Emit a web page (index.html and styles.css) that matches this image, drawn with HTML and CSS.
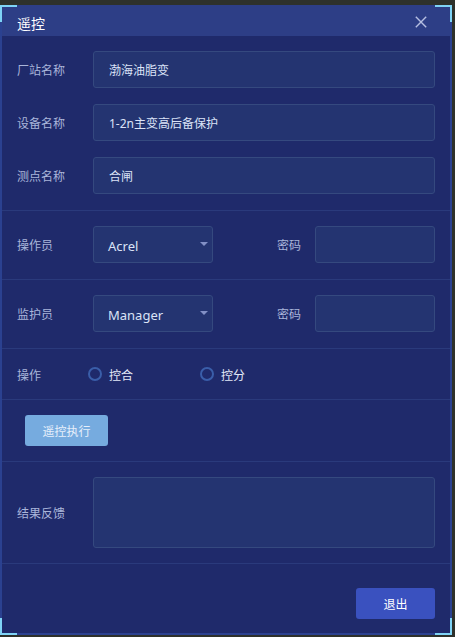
FILE: index.html
```html
<!DOCTYPE html>
<html lang="zh-CN">
<head>
<meta charset="utf-8">
<title>遥控</title>
<link rel="stylesheet" href="styles.css">
</head>
<body>
<div class="dialog">
  <span class="corner tl"></span>
  <span class="corner tr"></span>
  <span class="corner bl"></span>
  <span class="corner br"></span>

  <div class="header">
    <span class="title">遥控</span>
    <svg class="close" width="12" height="12" viewBox="0 0 12 12">
      <path d="M0.8 0.8 L11.2 11.2 M11.2 0.8 L0.8 11.2" stroke="#b6bfe2" stroke-width="1.4" fill="none"/>
    </svg>
  </div>

  <div class="section fields">
    <div class="row">
      <span class="label">厂站名称</span>
      <div class="input">渤海油脂变</div>
    </div>
    <div class="row">
      <span class="label">设备名称</span>
      <div class="input">1-2n主变高后备保护</div>
    </div>
    <div class="row">
      <span class="label">测点名称</span>
      <div class="input">合闸</div>
    </div>
  </div>

  <div class="section">
    <div class="row">
      <span class="label">操作员</span>
      <div class="select"><span>Acrel</span><i class="caret"></i></div>
      <span class="label pwd-label">密码</span>
      <div class="input pwd"></div>
    </div>
  </div>

  <div class="section">
    <div class="row">
      <span class="label">监护员</span>
      <div class="select"><span>Manager</span><i class="caret"></i></div>
      <span class="label pwd-label">密码</span>
      <div class="input pwd"></div>
    </div>
  </div>

  <div class="section radios">
    <span class="label op-label">操作</span>
    <label class="radio-item"><span class="radio"></span><span class="radio-text">控合</span></label>
    <label class="radio-item second"><span class="radio"></span><span class="radio-text">控分</span></label>
  </div>

  <div class="section exec">
    <button class="btn-exec">遥控执行</button>
  </div>

  <div class="section">
    <div class="row">
      <span class="label">结果反馈</span>
      <div class="input textarea"></div>
    </div>
  </div>

  <div class="footer">
    <button class="btn-exit">退出</button>
  </div>
</div>
</body>
</html>
```

FILE: styles.css
```css
* { box-sizing: border-box; }

html, body {
  margin: 0;
  padding: 0;
  background: #2e312b;
  font-family: "Noto Sans", "Noto Sans CJK SC", sans-serif;
}

.dialog {
  position: relative;
  margin-top: 5px;
  width: 452px;
  height: 630px;
  border: 2px solid #2b4190;
  border-top-color: #2d3e86;
  background: #1f2a6b;
  display: flex;
  flex-direction: column;
}

.corner {
  position: absolute;
  width: 17px;
  height: 17px;
  border: 0 solid #7fd3f6;
}
.corner.tl { top: -2px; left: -2px; border-top-width: 2px; border-left-width: 2px; }
.corner.tr { top: -2px; right: -2px; border-top-width: 2px; border-right-width: 2px; }
.corner.bl { bottom: -2px; left: -2px; border-bottom-width: 2px; border-left-width: 2px; }
.corner.br { bottom: -2px; right: -2px; border-bottom-width: 2px; border-right-width: 2px; }

.header {
  height: 29px;
  background: #2d3e86;
  display: flex;
  align-items: center;
  justify-content: space-between;
  padding: 2px 23px 0 15px;
}
.title {
  color: #ffffff;
  font-size: 14px;
  font-family: "Noto Sans CJK SC", sans-serif;
}
.close { display: block; margin-top: -2px; }

.section {
  padding: 15px 15px 16px 15px;
  border-bottom: 1px solid #2a3a7c;
}
.fields {
  display: flex;
  flex-direction: column;
  gap: 16px;
}

.row {
  display: flex;
  align-items: center;
}

.label {
  width: 76px;
  flex: none;
  color: #a9b5da;
  font-size: 12px;
  font-family: "Noto Sans CJK SC", sans-serif;
}

.input {
  flex: 1;
  height: 37px;
  background: #243471;
  border: 1px solid #35497f;
  border-radius: 3px;
  padding: 0 15px;
  display: flex;
  align-items: center;
  color: #dbe3f7;
  font-size: 12px;
}

.select {
  width: 120px;
  flex: none;
  height: 37px;
  background: #243471;
  border: 1px solid #35497f;
  border-radius: 3px;
  padding: 2px 4px 0 14px;
  display: flex;
  align-items: center;
  justify-content: space-between;
  color: #dbe3f7;
  font-size: 13px;
}
.caret {
  width: 0;
  height: 0;
  border-left: 4.5px solid transparent;
  border-right: 4.5px solid transparent;
  border-top: 4px solid #8290c6;
  margin-top: -3px;
}

.pwd-label {
  width: 38px;
  margin-left: 64px;
}
.pwd { flex: 1; }

.radios {
  height: 51px;
  padding: 0 15px;
  display: flex;
  align-items: center;
}
.op-label { width: 71px; }
.radio-item {
  display: flex;
  align-items: center;
  gap: 7px;
}
.radio-item.second { margin-left: 67px; }
.radio {
  width: 14px;
  height: 14px;
  border: 2px solid #3a5ea9;
  border-radius: 50%;
}
.radio-text {
  color: #e3e9f8;
  font-size: 12px;
  font-family: "Noto Sans CJK SC", sans-serif;
}

.exec {
  padding: 15px 15px 15px 23px;
}
.btn-exec {
  display: block;
  width: 83px;
  height: 31px;
  border: none;
  border-radius: 3px;
  background: #76abdf;
  color: #e6effb;
  font-size: 12px;
  font-family: "Noto Sans CJK SC", sans-serif;
  padding: 0;
}

.textarea {
  height: 71px;
}
.section:has(.textarea) { padding-bottom: 15px; }

.footer {
  flex: 1;
  display: flex;
  justify-content: flex-end;
  align-items: flex-start;
  padding: 24px 15px 0 15px;
}
.btn-exit {
  width: 79px;
  height: 31px;
  border: none;
  border-radius: 3px;
  background: #3a51bf;
  color: #ffffff;
  font-size: 12px;
  font-family: "Noto Sans CJK SC", sans-serif;
  padding: 0;
}
```
